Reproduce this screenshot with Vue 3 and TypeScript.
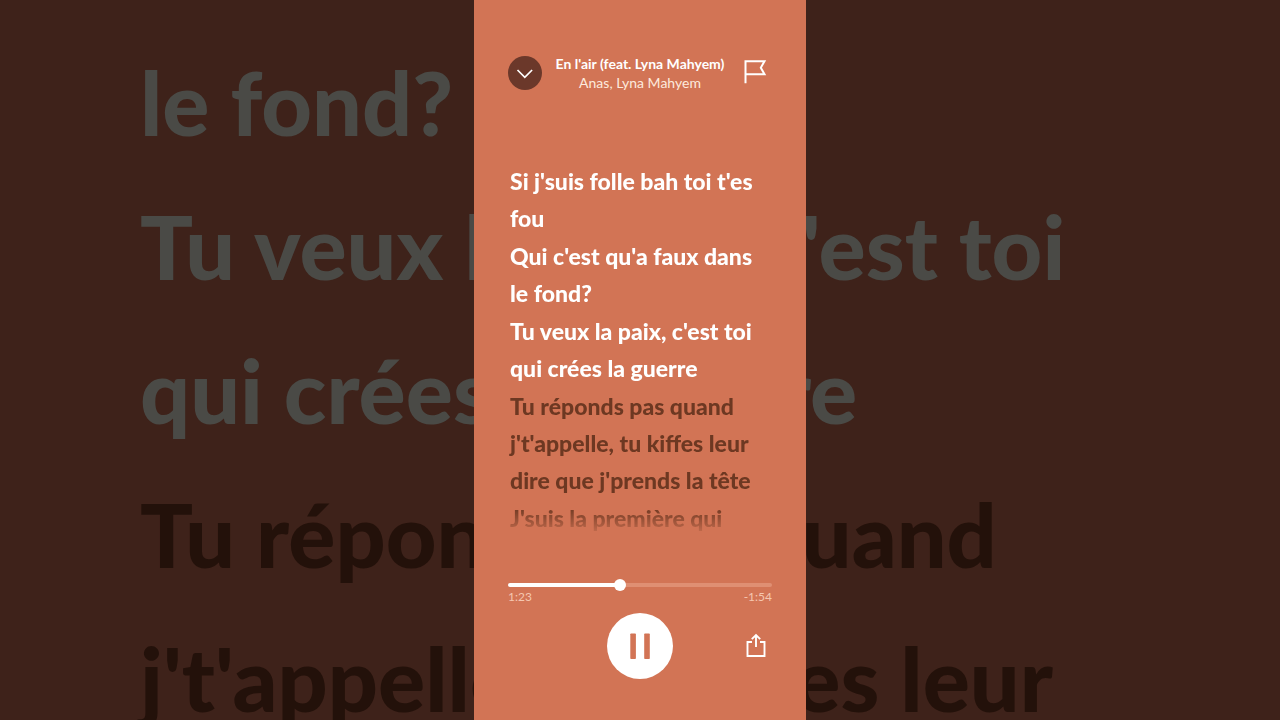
<script setup lang="ts">
import { computed, ref } from 'vue'

interface Verse {
  sung: boolean
  lines: string[]
}

const verses: Verse[] = [
  { sung: true, lines: ["Si j'suis folle bah toi t'es", 'fou'] },
  { sung: true, lines: ["Qui c'est qu'a faux dans", 'le fond?'] },
  { sung: true, lines: ["Tu veux la paix, c'est toi", 'qui crées la guerre'] },
  { sung: false, lines: ['Tu réponds pas quand', "j't'appelle, tu kiffes leur", "dire que j'prends la tête"] },
  { sung: false, lines: ["J'suis la première qui"] },
]

const backdropLines = verses
  .flatMap((verse) => verse.lines.map((text) => ({ text, sung: verse.sung })))
  .slice(3, 8)

const duration = 197
const elapsed = ref(83)
const playing = ref(true)

const formatTime = (seconds: number): string =>
  `${Math.floor(seconds / 60)}:${String(seconds % 60).padStart(2, '0')}`

const elapsedLabel = computed(() => formatTime(elapsed.value))
const remainingLabel = computed(() => `-${formatTime(duration - elapsed.value)}`)
const progress = computed(() => `${(elapsed.value / duration) * 100}%`)
</script>

<template>
  <div class="stage">
    <div class="backdrop" aria-hidden="true">
      <p v-for="line in backdropLines" :key="line.text" :class="{ sung: line.sung }">{{ line.text }}</p>
    </div>

    <main class="player">
      <header class="top">
        <button class="collapse" type="button" aria-label="Close lyrics">
          <svg viewBox="0 0 34 34" width="34" height="34" fill="none" stroke="currentColor" stroke-width="1.7">
            <path d="M9.5 14 16.800 21.300 24.100 14" />
          </svg>
        </button>
        <div class="track">
          <h1>En l'air (feat. Lyna Mahyem)</h1>
          <p>Anas, Lyna Mahyem</p>
        </div>
        <button class="plain" type="button" aria-label="Report lyrics">
          <svg viewBox="0 0 24 26" width="24" height="26" fill="none" stroke="currentColor" stroke-width="2">
            <path d="M2.500 23.200V1.200H21.500l-3.700 6.500 3.700 6.500H2.500" />
          </svg>
        </button>
      </header>

      <section class="lyrics" aria-label="Lyrics">
        <div v-for="(verse, i) in verses" :key="i" class="verse" :class="{ sung: verse.sung }">
          <p v-for="line in verse.lines" :key="line">{{ line }}</p>
        </div>
      </section>

      <footer class="controls">
        <input
          v-model.number="elapsed"
          class="seek"
          type="range"
          min="0"
          :max="duration"
          aria-label="Playback position"
          :style="{ '--progress': progress }"
        />
        <div class="times">
          <span>{{ elapsedLabel }}</span>
          <span>{{ remainingLabel }}</span>
        </div>
        <div class="buttons">
          <button class="play" type="button" :aria-label="playing ? 'Pause' : 'Play'" @click="playing = !playing">
            <svg viewBox="0 0 66 66" width="66" height="66" fill="currentColor">
              <template v-if="playing">
                <rect x="23.300" y="20.500" width="5.600" height="25.500" rx="0.800" />
                <rect x="37.200" y="20.500" width="5.600" height="25.500" rx="0.800" />
              </template>
              <path v-else d="M25 19v28l22-14z" />
            </svg>
          </button>
          <button class="plain share" type="button" aria-label="Share">
            <svg viewBox="0 0 22 26" width="22" height="26" fill="none" stroke="currentColor" stroke-width="1.900">
              <path d="M8 9H3.500v14h17V9H16M12 14V2M7.800 6.200 12 2l4.200 4.200" />
            </svg>
          </button>
        </div>
      </footer>
    </main>
  </div>
</template>

<style>
body {
  margin: 0;
  background: #3e221a;
}
</style>

<style scoped>
.stage {
  position: relative;
  display: flex;
  justify-content: center;
  min-height: 100vh;
  overflow: hidden;
  background: #3e221a;
  font-family: Lato, 'Liberation Sans', sans-serif;
}

p,
h1 {
  margin: 0;
}

.backdrop {
  position: absolute;
  inset: 0;
  box-sizing: border-box;
  padding: 30px 0 0 140px;
  overflow: hidden;
  color: #23110a;
  font-size: 88px;
  font-weight: 900;
  line-height: 144px;
  white-space: nowrap;
}

.backdrop .sung {
  color: #4a4a46;
}

.player {
  position: relative;
  display: flex;
  flex-direction: column;
  box-sizing: border-box;
  width: 100%;
  max-width: 332px;
  padding: 54px 34px 41px;
  background: #d27455;
  color: #fff;
}

.top {
  display: grid;
  grid-template-columns: 34px 1fr 34px;
  align-items: center;
}

button {
  display: grid;
  place-items: center;
  padding: 0;
  border: 0;
  background: none;
  color: inherit;
  cursor: pointer;
}

.collapse {
  width: 34px;
  height: 34px;
  border-radius: 50%;
  background: #6b382a;
}

.track {
  text-align: center;
  font-size: 14px;
  line-height: 19px;
  white-space: nowrap;
}

.track h1 {
  font-size: 14px;
  font-weight: 700;
}

.track p {
  color: #fdeadd;
}

.lyrics {
  display: flex;
  flex-direction: column;
  gap: 1px;
  margin-top: 71px;
  padding-left: 2px;
  color: #6d3822;
  font-size: 23px;
  font-weight: 900;
  line-height: 37px;
  white-space: nowrap;
  -webkit-mask-image: linear-gradient(to top, transparent, #000 30px);
  mask-image: linear-gradient(to top, transparent, #000 30px);
}

.verse.sung {
  color: #fff;
}

.controls {
  margin-top: auto;
}

.seek {
  display: block;
  width: 100%;
  height: 12px;
  margin: 0;
  appearance: none;
  background: transparent;
  cursor: pointer;
}

.seek::-webkit-slider-runnable-track {
  height: 4px;
  border-radius: 2px;
  background: linear-gradient(to right, #fff var(--progress), #df8f73 var(--progress));
}

.seek::-webkit-slider-thumb {
  width: 12px;
  height: 12px;
  margin-top: -4px;
  appearance: none;
  border: 0;
  border-radius: 50%;
  background: #fff;
}

.times {
  display: flex;
  justify-content: space-between;
  color: #f5c7b0;
  font-size: 12px;
  line-height: 12px;
}

.buttons {
  display: grid;
  grid-template-columns: 1fr 66px 1fr;
  align-items: center;
  margin-top: 10px;
}

.play {
  grid-column: 2;
  width: 66px;
  height: 66px;
  border-radius: 50%;
  background: #fff;
  color: #d27455;
}

.share {
  justify-self: end;
  width: 34px;
  height: 34px;
}
</style>
